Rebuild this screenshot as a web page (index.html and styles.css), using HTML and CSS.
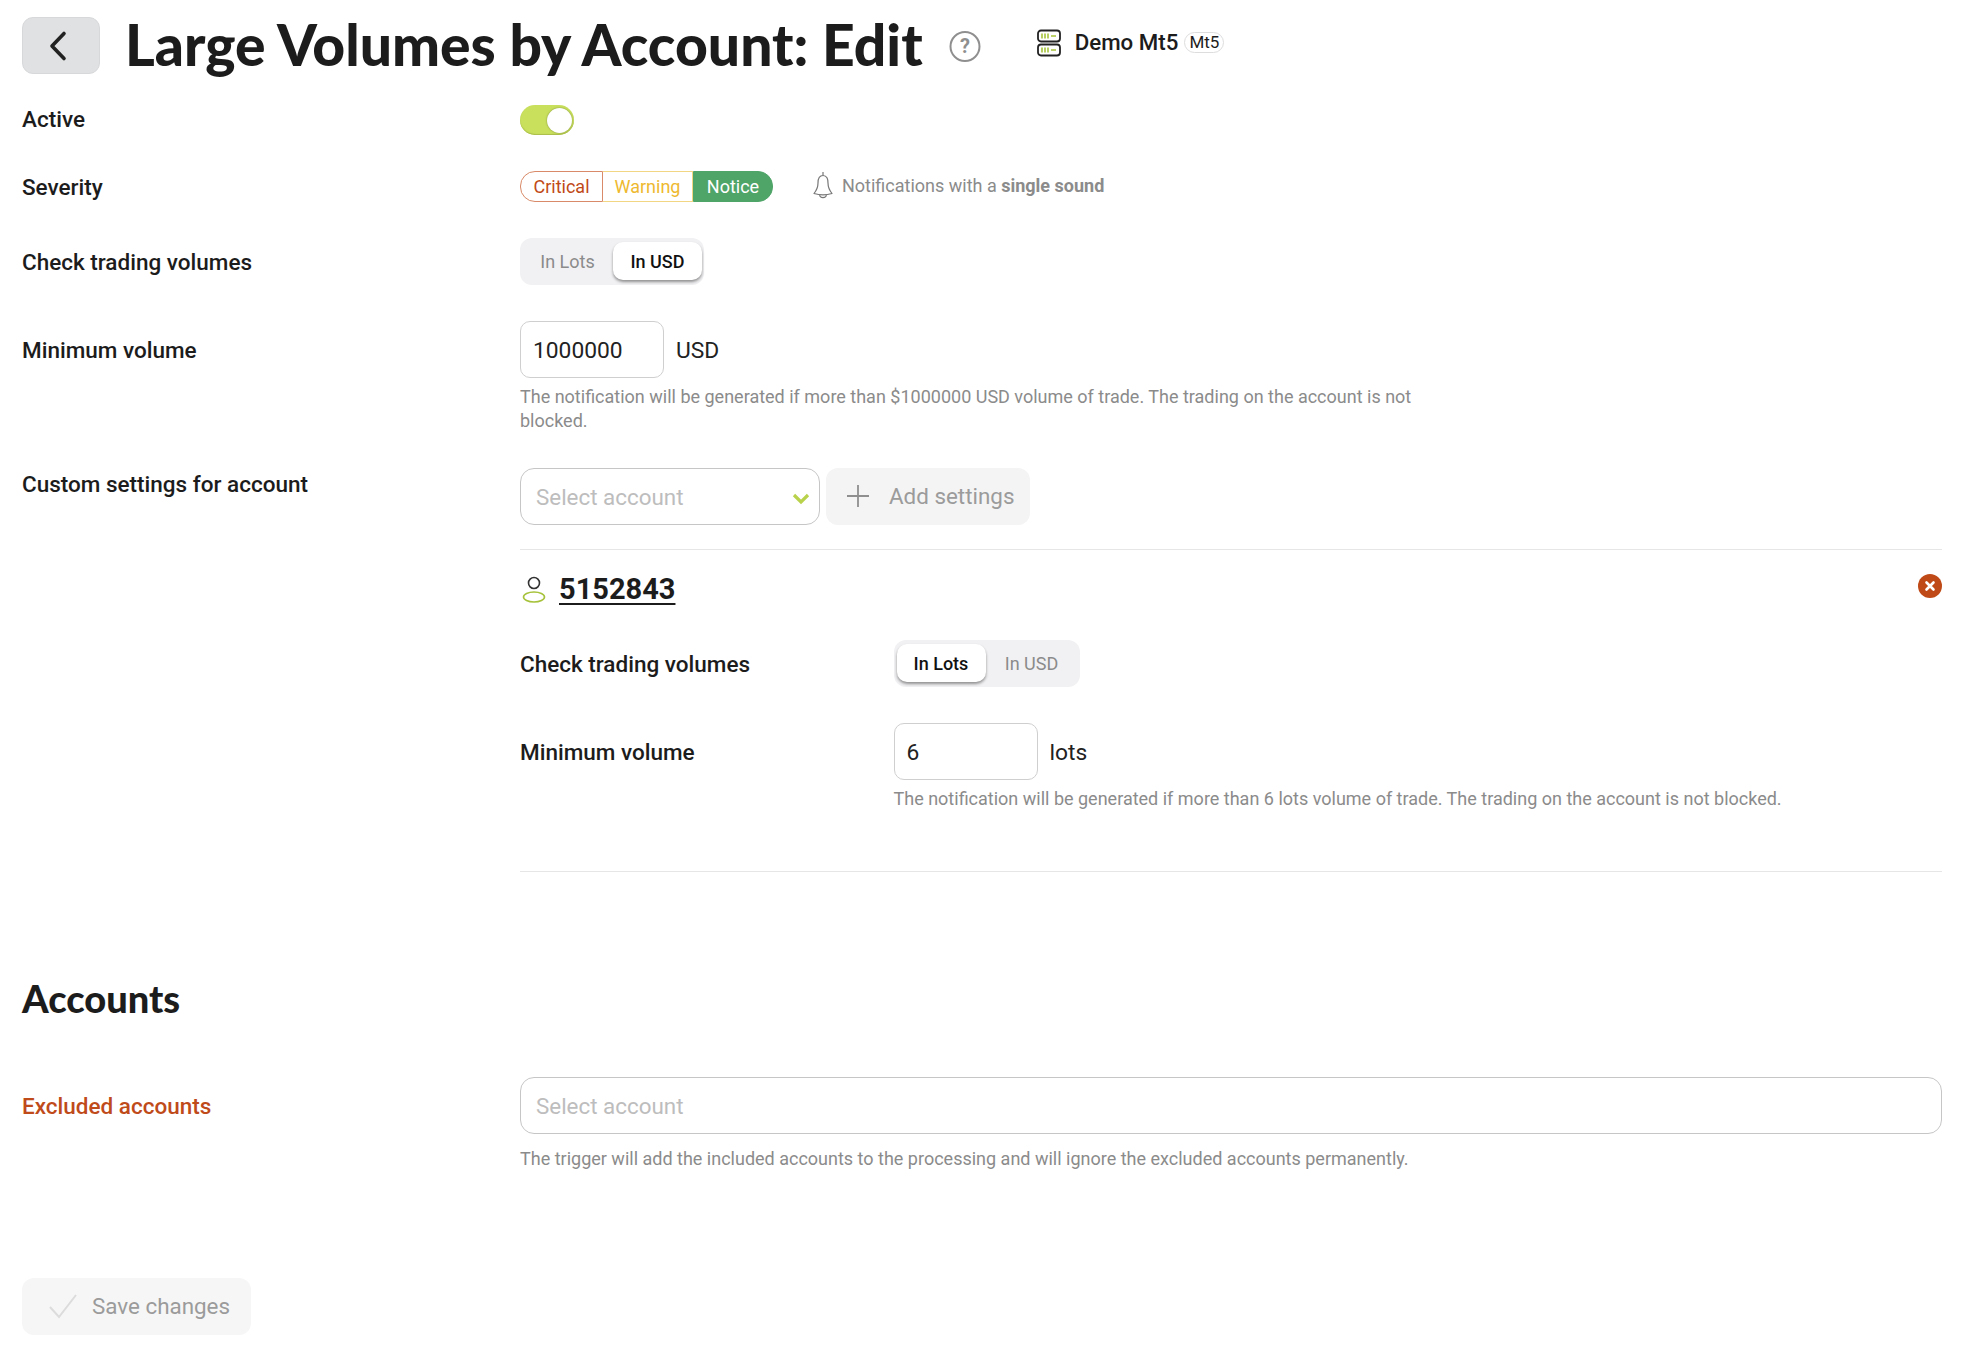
FILE: index.html
```html
<!DOCTYPE html>
<html lang="en">
<head>
<meta charset="utf-8">
<title>Large Volumes by Account: Edit</title>
<link rel="stylesheet" href="styles.css">
</head>
<body>
<div class="page">
  <header class="header">
    <button class="back" type="button" aria-label="Back">
      <svg width="26" height="32" viewBox="0 0 26 32"><path d="M19 3.500 7 16l12 12.500" fill="none" stroke="#222" stroke-width="3.600" stroke-linecap="round" stroke-linejoin="round"/></svg>
    </button>
    <h1 class="title">Large Volumes by Account: Edit</h1>
    <svg class="help" width="32" height="33" viewBox="0 0 32 33"><circle cx="16" cy="16.500" r="14.500" fill="none" stroke="#8f8f8f" stroke-width="2"/><text x="16" y="23" text-anchor="middle" class="help-q">?</text></svg>
    <svg class="server" width="24" height="28" viewBox="0 0 24 28"><rect x="1" y="1.500" width="22" height="11" rx="3" fill="none" stroke="#222" stroke-width="1.800"/><rect x="1" y="15.500" width="22" height="11" rx="3" fill="none" stroke="#222" stroke-width="1.800"/><path d="M5 4.500v5M8 4.500v5M11 4.500v5M14 7h5M5 18.500v5M8 18.500v5M11 18.500v5M14 21h5" stroke="#a6c23a" stroke-width="1.600"/></svg>
    <span class="server-name">Demo Mt5</span>
    <span class="server-tag">Mt5</span>
  </header>

  <div class="row row-active">
    <div class="label">Active</div>
    <div class="toggle"><span class="knob"></span></div>
  </div>

  <div class="row row-severity">
    <div class="label">Severity</div>
    <div class="field-inline">
      <div class="sev">
        <span class="sev-item sev-critical">Critical</span>
        <span class="sev-item sev-warning">Warning</span>
        <span class="sev-item sev-notice">Notice</span>
      </div>
      <svg class="bell" width="20" height="27" viewBox="0 0 20 27"><path d="M10 0v4M10 3.500C6 3.500 5 7 5 11c0 4-2 8-4 10.500 5 1.500 13 1.500 18 0-2-2.500-4-6.500-4-10.500 0-4-1-7.500-5-7.500ZM6.500 23c.5 3.500 6.500 3.500 7 0" fill="none" stroke="#777" stroke-width="1.200" stroke-linejoin="round"/></svg>
      <span class="sound">Notifications with a <b>single sound</b></span>
    </div>
  </div>

  <div class="row row-check">
    <div class="label">Check trading volumes</div>
    <div class="switch">
      <span class="opt">In Lots</span>
      <span class="opt opt-on">In USD</span>
    </div>
  </div>

  <div class="row row-min">
    <div class="label">Minimum volume</div>
    <div>
      <div class="field-inline">
        <div class="input">1000000</div>
        <span class="unit">USD</span>
      </div>
      <p class="hint hint-wide">The notification will be generated if more than $1000000 USD volume of trade. The trading on the account is not blocked.</p>
    </div>
  </div>

  <div class="row row-custom">
    <div class="label">Custom settings for account</div>
    <div>
      <div class="field-inline add-line">
        <div class="select select-small">
          <span>Select account</span>
          <svg width="18" height="12" viewBox="0 0 18 12"><path d="M2 2l7 7 7-7" fill="none" stroke="#b9d24b" stroke-width="3.200"/></svg>
        </div>
        <button class="btn-add" type="button">
          <svg width="24" height="24" viewBox="0 0 24 24"><path d="M12 1v22M1 12h22" stroke="#8f8f8f" stroke-width="1.800"/></svg>
          Add settings
        </button>
      </div>
      <section class="custom">
        <div class="account">
          <svg width="24" height="28" viewBox="0 0 24 28"><circle cx="12" cy="8" r="5.500" fill="none" stroke="#333" stroke-width="1.600"/><ellipse cx="12" cy="22" rx="10.500" ry="5" fill="none" stroke="#a6c23a" stroke-width="1.600"/></svg>
          <a class="account-id">5152843</a>
          <svg class="close" width="24" height="24" viewBox="0 0 24 24"><circle cx="12" cy="12" r="12" fill="#c04a17"/><path d="M8.500 8.500l7 7M15.500 8.500l-7 7" stroke="#fff" stroke-width="2.600" stroke-linecap="round"/></svg>
        </div>
        <div class="sub sub-check">
          <div class="label">Check trading volumes</div>
          <div class="switch switch-lots">
            <span class="opt opt-on">In Lots</span>
            <span class="opt">In USD</span>
          </div>
        </div>
        <div class="sub sub-min">
          <div class="label">Minimum volume</div>
          <div>
            <div class="field-inline">
              <div class="input">6</div>
              <span class="unit">lots</span>
            </div>
            <p class="hint">The notification will be generated if more than 6 lots volume of trade. The trading on the account is not blocked.</p>
          </div>
        </div>
      </section>
    </div>
  </div>

  <h2 class="section-title">Accounts</h2>

  <div class="row row-excluded">
    <div class="label label-error">Excluded accounts</div>
    <div>
      <div class="select"><span>Select account</span></div>
      <p class="hint hint-excluded">The trigger will add the included accounts to the processing and will ignore the excluded accounts permanently.</p>
    </div>
  </div>

  <button class="btn-save" type="button">
    <svg width="30" height="26" viewBox="0 0 30 26"><path d="M2 14l9 10L28 2" fill="none" stroke="#dcdcdc" stroke-width="2"/></svg>
    Save changes
  </button>
</div>
</body>
</html>
```
FILE: styles.css
```css
* { box-sizing: border-box; }
html, body { margin: 0; background: #fff; }
body { font-family: Roboto, "Liberation Sans", sans-serif; color: #1c1c1c; }
.page { padding: 17px 28px 0 22px; width: 1970px; height: 1351px; overflow: hidden; }

.header { display: flex; align-items: center; height: 57px; }
.back { width: 78px; height: 57px; border: 1px solid #d6d8d9; border-radius: 11px; background: #dfe1e2; display: flex; align-items: center; justify-content: center; padding: 0 6px 0 0; }
.title { margin: -2px 0 0 25px; font-family: Lato, sans-serif; font-weight: 900; font-size: 57px; line-height: 57px; letter-spacing: 0; color: #1c1c1c; white-space: nowrap; }
.help { margin-left: 26px; margin-top: 2px; }
.help-q { font-family: Roboto, sans-serif; font-weight: 700; font-size: 20px; fill: #8f8f8f; }
.server { margin-left: 56px; margin-top: -6px; }
.server-name { margin-left: 14px; font-size: 22.300px; font-weight: 500; margin-top: -8px; }
.server-tag { flex: none; margin-left: 6px; margin-top: -6px; height: 21px; width: 40px; text-align: center; border: 1px solid #ddd; border-radius: 11px; font-size: 17px; line-height: 19px; }

.row { display: grid; grid-template-columns: 498px 1fr; }
.label { font-size: 22.500px; font-weight: 500; line-height: 30px; color: #1c1c1c; white-space: nowrap; }
.label-error { color: #bf4a1a; }
.field-inline { display: flex; align-items: center; }

.row-active { margin-top: 31px; height: 30px; }
.row-active > .label { margin-top: -1px; }
.toggle { width: 54px; height: 30px; border-radius: 15px; background: #c8e05c; box-shadow: inset 0 -1px 1px #a9bd4a; position: relative; }
.knob { position: absolute; right: 2px; top: 3px; width: 25px; height: 25px; border-radius: 50%; background: #fff; box-shadow: 0 0 2px #7d8a3a; }

.row-severity { margin-top: 36px; height: 31px; }
.row-severity > .label { margin-top: 1px; }
.sev { display: flex; height: 31px; font-size: 18px; line-height: 29px; }
.sev-item { display: block; text-align: center; border: 1px solid; }
.sev-critical { width: 83px; color: #c04a17; border-color: #d98a68; border-radius: 15px 0 0 15px; }
.sev-warning { width: 90px; color: #eeb92f; border-color: #f2d684; border-left: 0; }
.sev-notice { width: 80px; color: #fff; background: #4fa468; border-color: #4fa468; border-radius: 0 15px 15px 0; }
.bell { margin-left: 40px; margin-top: -2px; }
.sound { margin-left: 9px; margin-top: -2px; font-size: 18px; color: #8b8b8b; }
.sound b { font-weight: 700; }

.row-check { margin-top: 36px; height: 47px; align-items: center; }
.switch { display: flex; width: 184px; height: 47px; padding: 4px 2px 5px; border-radius: 12px; background: #f1f1f3; font-size: 18px; }
.switch-lots { width: 186px; padding-left: 3px; }
.opt { flex: 1 1 auto; display: flex; align-items: center; justify-content: center; color: #8b8b8b; border-radius: 10px; }
.opt-on { flex: 0 0 89px; color: #111; font-weight: 500; background: #fff; box-shadow: 0 2px 3px rgba(0,0,0,.4); }

.row-min { margin-top: 36px; }
.row-min > .label { margin-top: 14px; }
.input { width: 144px; height: 57px; border: 1px solid #cfcfcf; border-radius: 10px; padding-left: 12px; font-size: 22.800px; line-height: 57px; color: #222; }
.unit { margin-left: 12px; font-size: 22.800px; color: #222; padding-top: 1px; }
.hint { margin: 7px 0 0; font-size: 18px; line-height: 24px; color: #8b8b8b; }
.hint-wide { width: 900px; }
.hint-excluded { margin-top: 13px; }

.row-custom { margin-top: 35px; }
.row-custom > .label { padding-top: 1px; }
.select { height: 57px; border: 1px solid #c6c6c6; border-radius: 14px; padding: 0 15px; display: flex; align-items: center; justify-content: space-between; font-size: 22.400px; color: #bdbdbd; }
.select-small { width: 300px; padding-right: 9px; }
.select-small svg { margin-top: 4px; }
.btn-add { margin-left: 6px; width: 204px; height: 57px; border: 0; border-radius: 12px; background: #f4f4f4; display: flex; align-items: center; gap: 19px; padding: 0 0 1px 20px; font: 400 22.400px Roboto, sans-serif; color: #9b9b9b; }

.custom { margin-top: 24px; height: 323px; border-top: 1px solid #e6e6e6; border-bottom: 1px solid #e6e6e6; }
.account { display: flex; align-items: center; height: 48px; margin-top: 15px; }
.account svg { margin-left: 2px; }
.account-id { margin-left: 13px; font-size: 29px; font-weight: 700; color: #1c1c1c; text-decoration: underline; text-underline-offset: 4px; }
.account .close { margin-left: auto; margin-top: -6px; }
.sub { display: grid; grid-template-columns: 373.500px 1fr; }
.sub-check { margin-top: 27px; height: 47px; align-items: center; }
.sub-min { margin-top: 36px; }
.sub-min > .label { margin-top: 14px; }

.section-title { margin: 103px 0 0; font-family: Lato, sans-serif; font-size: 38px; line-height: 46px; font-weight: 900; color: #1c1c1c; }

.row-excluded { margin-top: 56px; }
.row-excluded > .label { margin-top: 14px; }

.btn-save { margin-top: 107px; width: 229px; height: 57px; border: 0; border-radius: 12px; background: #f6f6f6; display: flex; align-items: center; gap: 14px; padding: 0 0 2px 26px; font: 400 22.400px Roboto, sans-serif; color: #9b9b9b; }
```
